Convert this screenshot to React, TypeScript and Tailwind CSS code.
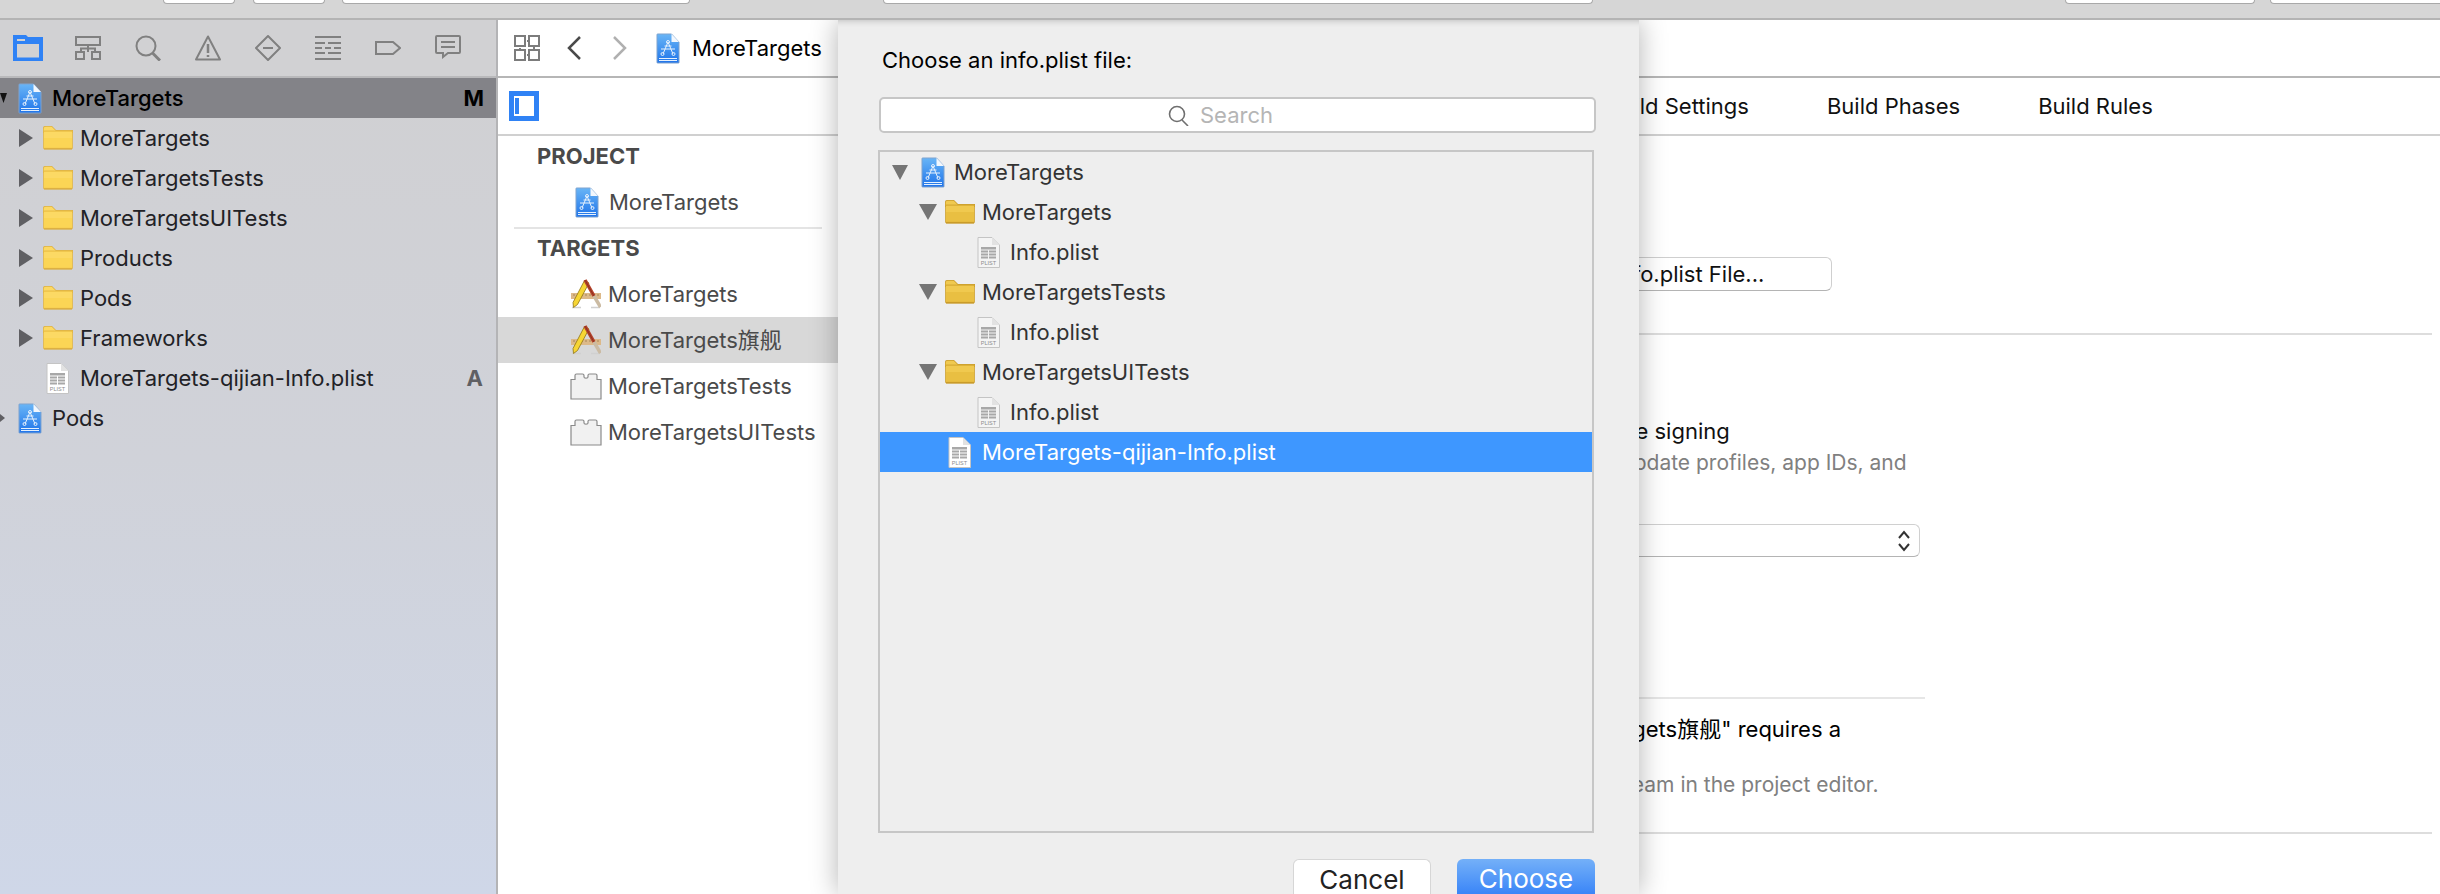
function ProjectIcon() {
    return (
        <svg width="24" height="31" viewBox="0 0 24 31" className="shrink-0">
            <defs>
                <linearGradient id="proj" x1="0" y1="0" x2="0" y2="1">
                    <stop offset="0" stopColor="#69b5f6" />
                    <stop offset="1" stopColor="#1f74ea" />
                </linearGradient>
            </defs>
            <path d="M1.5 1h14l7.5 8v20.5a.5.5 0 0 1-.5.5h-21a.5.5 0 0 1-.5-.5V1.5a.5.5 0 0 1 .5-.5z" fill="url(#proj)" stroke="#7ea3cf" />
            <path d="M15.5 1v8H23z" fill="#f2f7fd" />
            <g stroke="#e6f1fd" strokeWidth="1" fill="none">
                <path d="M12 9 7 21M12 9l5 12M5 16h14M8.5 13h7" />
                <circle cx="6.5" cy="21" r="1.5" />
                <circle cx="17.5" cy="21" r="1.5" />
                <circle cx="12" cy="9" r="1.5" />
                <path d="M3 25.5h18M3 27.5h18" />
            </g>
        </svg>
    )
}

function FolderIcon({ dark = false }: { dark?: boolean }) {
    const top = dark ? "#f0c94f" : "#fcd964"
    const bottom = dark ? "#e9bf42" : "#fbd555"
    const edge = dark ? "#c99b2a" : "#dcb043"
    return (
        <svg width="30" height="24" viewBox="0 0 30 24" className="shrink-0">
            <path d="M0 5V2q0-2 2-2h7l4 4h17v3H0z" fill={edge} />
            <path d="M.7 5V2.500q0-1.800 1.800-1.800h6.200l4 4h16.600V7H.7z" fill={top} />
            <rect x="0.5" y="5" width="29" height="18" rx="1" fill={bottom} stroke={edge} strokeWidth="0.7" />
            <path d="M1 6h28v6H1z" fill={top} />
            <path d="M1 22.700h28" stroke={edge} strokeWidth="1.600" />
        </svg>
    )
}

function PlistIcon({ bright = false }: { bright?: boolean }) {
    const fill = bright ? "#ffffff" : "#f4f4f4"
    return (
        <svg width="23" height="31" viewBox="0 0 23 31" className="shrink-0">
            <path d="M1 .5h14l7.500 7.500v22.500H1z" fill={fill} stroke="#c4c4c4" />
            <path d="M15 .5V8h7.500z" fill="#e2e2e2" />
            <g fill="#a8a8a8">
                <rect x="4" y="10" width="15" height="2.500" />
                <rect x="4" y="13.500" width="7" height="2" />
                <rect x="12" y="13.500" width="7" height="2" />
                <rect x="4" y="16.500" width="7" height="2" />
                <rect x="12" y="16.500" width="7" height="2" />
                <rect x="4" y="19.500" width="7" height="2" />
                <rect x="12" y="19.500" width="7" height="2" />
            </g>
            <text x="11.500" y="28" textAnchor="middle" fontSize="5.500" fill="#8c8c8c" fontFamily="Liberation Sans">PLIST</text>
        </svg>
    )
}

function TargetIcon() {
    return (
        <svg width="30" height="30" viewBox="0 0 30 30" className="shrink-0">
            <path d="M1 28.500h9M20 28.500h9" stroke="#d0d0d0" strokeWidth="1.500" />
            <rect x="0" y="14" width="30" height="6" fill="#dcb98a" />
            <path d="M3 15v2M7 15v2M11 15v2M15 15v2M19 15v2M23 15v2M27 15v2" stroke="#9a784a" strokeWidth="0.8" />
            <path d="M13.500 1.500 18 4 6.500 25.500 2.500 28.500l-.5-5z" fill="#f6d534" stroke="#8f7414" strokeWidth="0.8" />
            <path d="M14 1 23 17" stroke="#b5412a" strokeWidth="3.500" />
            <path d="M23 17l6.500 11" stroke="#cbbba3" strokeWidth="3.500" />
            <path d="M14 1 23 17" stroke="#6e2a1b" strokeWidth="0.6" />
        </svg>
    )
}

function TestIcon() {
    return (
        <svg width="32" height="27" viewBox="0 0 32 27" className="shrink-0">
            <path
                d="M1 6.500h4V2.500q0-1.500 1.500-1.500h6q1.500 0 1.500 1.500v1.500c0 1.500 4 1.500 4 0V2.500q0-1.500 1.500-1.500h6q1.500 0 1.500 1.500v4h4v19.500H1z"
                fill="#f1f1f1"
                stroke="#8a8a8a"
                strokeWidth="1.200"
            />
        </svg>
    )
}

function Triangle({ dir, w, h, color }: { dir: "right" | "down"; w: number; h: number; color: string }) {
    const points = dir === "right" ? `0,0 ${w},${h / 2} 0,${h}` : `0,0 ${w},0 ${w / 2},${h}`
    return (
        <svg width={w} height={h} className="shrink-0">
            <polygon points={points} fill={color} />
        </svg>
    )
}

function NavIcons() {
    const s = { stroke: "#808080", strokeWidth: 2, fill: "none" }
    return (
        <div className="flex h-[58px] items-center border-b-2 border-[#b9b9bb] bg-[#d1d1d3] pl-[13px] gap-[30px] w-full">
            <svg width="30" height="26" viewBox="0 0 30 26" className="shrink-0">
                <path d="M0 0h13l2 2h15v24H0z" fill="#2f82f5" />
                <rect x="4" y="9" width="22" height="13.500" fill="#d1d1d3" />
                <rect x="4" y="4" width="8" height="2" fill="#d1d1d3" />
            </svg>
            <svg width="26" height="26" viewBox="0 0 26 26" {...s} className="shrink-0 ml-[2px]">
                <rect x="1" y="2" width="24" height="8" />
                <path d="M13 10v7M6 17v-3.500h14V17" />
                <rect x="1" y="17" width="8" height="7" />
                <rect x="17" y="17" width="8" height="7" />
            </svg>
            <svg width="26" height="26" viewBox="0 0 26 26" {...s} className="shrink-0 ml-[4px]">
                <circle cx="11" cy="11" r="9.500" />
                <path d="M17.500 18 25 25.500" strokeWidth="3" />
            </svg>
            <svg width="26" height="26" viewBox="0 0 26 26" {...s} className="shrink-0 ml-[4px]">
                <path d="M13 1.500 25 24.500H1z" strokeLinejoin="round" />
                <path d="M13 9v9M13 20v2" strokeWidth="2.500" />
            </svg>
            <svg width="26" height="26" viewBox="0 0 26 26" {...s} className="shrink-0 ml-[4px]">
                <path d="M13 1 25 13 13 25 1 13z" strokeLinejoin="round" />
                <path d="M8 13h10" />
            </svg>
            <svg width="26" height="24" viewBox="0 0 26 24" {...s} className="shrink-0 ml-[4px]">
                <path d="M0 1h26M0 7h10M13 7h13M0 12h7M10 12h6M19 12h7M0 17h10M13 17h13M0 23h26" />
            </svg>
            <svg width="26" height="14" viewBox="0 0 26 14" {...s} className="shrink-0 ml-[4px]">
                <path d="M1 1h17l7 6-7 6H1z" />
            </svg>
            <svg width="26" height="24" viewBox="0 0 26 24" {...s} className="shrink-0 ml-[4px] -mt-[2px]">
                <path d="M2 1h22q1 0 1 1v15q0 1-1 1H13l-5 4v-4H2q-1 0-1-1V2q0-1 1-1z" />
                <path d="M6 7h14M6 12h14" />
            </svg>
        </div>
    )
}

function TreeRow({ name }: { name: string }) {
    return (
        <div className="flex h-10 items-center pl-[19px] text-[#222226]">
            <Triangle dir="right" w={14} h={18} color="#5f5f63" />
            <span className="ml-[10px]"><FolderIcon /></span>
            <span className="ml-[7px] whitespace-nowrap">{name}</span>
        </div>
    )
}

function Navigator() {
    return (
        <div className="flex w-[498px] shrink-0 flex-col border-r-2 border-[#b4b4b6] bg-gradient-to-b from-[#d0d0d2] via-[#d0d2d9] to-[#cfd7e8] overflow-hidden">
            <NavIcons />
            <div className="flex h-10 items-center bg-[#838388] pr-[12px] text-black font-medium">
                <Triangle dir="down" w={7} h={10} color="#111111" />
                <span className="ml-[11px]"><ProjectIcon /></span>
                <span className="ml-[10px] whitespace-nowrap">MoreTargets</span>
                <span className="ml-auto font-bold">M</span>
            </div>
            <TreeRow name="MoreTargets" />
            <TreeRow name="MoreTargetsTests" />
            <TreeRow name="MoreTargetsUITests" />
            <TreeRow name="Products" />
            <TreeRow name="Pods" />
            <TreeRow name="Frameworks" />
            <div className="flex h-10 items-center pl-[46px] pr-[13px] text-[#222226]">
                <PlistIcon bright />
                <span className="ml-[11px] whitespace-nowrap">MoreTargets-qijian-Info.plist</span>
                <span className="ml-auto font-bold text-[#5f5f63]">A</span>
            </div>
            <div className="flex h-10 items-center text-[#222226]">
                <Triangle dir="right" w={5} h={8} color="#5f5f63" />
                <span className="ml-[13px]"><ProjectIcon /></span>
                <span className="ml-[10px]">Pods</span>
            </div>
        </div>
    )
}

function TopBar() {
    const btn = "h-[4px] rounded-b-[6px] border border-t-0 border-[#a9a9a9] bg-white shrink-0"
    return (
        <div className="flex h-[20px] items-start border-b-2 border-[#b4b4b4] bg-[#d6d6d6]">
            <div className={`${btn} ml-[163px] w-[72px]`} />
            <div className={`${btn} ml-[18px] w-[72px]`} />
            <div className={`${btn} ml-[17px] w-[348px]`} />
            <div className={`${btn} ml-[193px] w-[710px]`} />
            <div className={`${btn} ml-[472px] w-[190px]`} />
            <div className={`${btn} ml-[15px] w-[190px]`} />
        </div>
    )
}

function JumpBar() {
    return (
        <div className="flex h-[58px] items-center border-b-2 border-[#b6b6b6] bg-white pl-[16px] text-black">
            <svg width="26" height="26" viewBox="0 0 26 26" fill="none" stroke="#7c7c7c" strokeWidth="2" className="shrink-0">
                <rect x="1" y="1" width="10" height="10" />
                <path d="M15 1h10v10H15zM15 6h-2" />
                <rect x="1" y="15" width="10" height="10" />
                <path d="M15 15h10v10H15zM13 20h2M6 13v2M20 11v4" />
            </svg>
            <svg width="14" height="24" viewBox="0 0 14 24" fill="none" stroke="#4a4a4a" strokeWidth="2.500" className="ml-[27px] shrink-0">
                <path d="M13 1 2 12l11 11" />
            </svg>
            <svg width="14" height="24" viewBox="0 0 14 24" fill="none" stroke="#b0b0b0" strokeWidth="2.500" className="ml-[32px] shrink-0">
                <path d="m1 1 11 11L1 23" />
            </svg>
            <span className="ml-[29px]"><ProjectIcon /></span>
            <span className="ml-[12px] whitespace-nowrap">MoreTargets</span>
        </div>
    )
}

function TabBar() {
    return (
        <div className="flex h-[58px] items-center border-b-2 border-[#d0d0d0] bg-white pl-[11px] text-[#111111]">
            <div className="flex h-[30px] w-[30px] shrink-0 items-center border-[5px] border-[#2f82f5] pl-[1px]">
                <div className="h-[16px] w-[4px] bg-[#2f82f5]" />
            </div>
            <div className="ml-[1068px] flex gap-[78px] whitespace-nowrap">
                <span>Build Settings</span>
                <span>Build Phases</span>
                <span>Build Rules</span>
            </div>
        </div>
    )
}

function TargetList() {
    return (
        <div className="flex w-[340px] shrink-0 flex-col text-[#4a4a4a]">
            <div className="flex h-[43px] items-center pl-[39px] pb-[3px] font-bold">PROJECT</div>
            <div className="flex h-[46px] items-center pl-[77px]">
                <ProjectIcon />
                <span className="ml-[10px]">MoreTargets</span>
            </div>
            <div className="mx-[16px] mt-[2px] h-[2px] bg-[#e4e4e4]" />
            <div className="flex h-[42px] items-center pl-[39px] pb-[3px] font-bold">TARGETS</div>
            <div className="flex h-[46px] items-center pl-[73px]">
                <TargetIcon />
                <span className="ml-[7px] whitespace-nowrap">MoreTargets</span>
            </div>
            <div className="flex h-[46px] items-center bg-[#d8d8d8] pl-[73px]">
                <TargetIcon />
                <span className="ml-[7px] whitespace-nowrap">MoreTargets旗舰</span>
            </div>
            <div className="flex h-[46px] items-center pl-[72px]">
                <TestIcon />
                <span className="ml-[6px] whitespace-nowrap">MoreTargetsTests</span>
            </div>
            <div className="flex h-[46px] items-center pl-[72px]">
                <TestIcon />
                <span className="ml-[6px] whitespace-nowrap">MoreTargetsUITests</span>
            </div>
        </div>
    )
}

function SettingsPane() {
    return (
        <div className="flex min-w-0 flex-1 flex-col pl-[604px] pr-[8px] text-[#111111]">
            <button className="mt-[121px] h-[34px] w-[390px] shrink-0 rounded-[6px] border border-[#cfcfcf] border-b-[#b4b4b4] bg-white pl-[18px] text-center text-[#111111]">
                Choose Info.plist File...
            </button>
            <div className="mt-[42px] h-[2px] -ml-[604px] bg-[#dddddd]" />
            <div className="mt-[83px] -ml-[24px] whitespace-nowrap leading-[26px]">Automatically manage signing</div>
            <div className="mt-[6px] -ml-[40px] whitespace-nowrap text-[21px] leading-[26px] text-[#808080]">Xcode will create and update profiles, app IDs, and</div>
            <div className="mt-[48px] flex h-[33px] w-[478px] items-center justify-end rounded-[6px] border border-[#d0d0d0] border-b-[#b4b4b4] bg-white pr-[8px]">
                <svg width="14" height="22" viewBox="0 0 14 22" fill="none" stroke="#333333" strokeWidth="2">
                    <path d="m2 8 5-6 5 6M2 14l5 6 5-6" />
                </svg>
            </div>
            <div className="mt-[140px] h-[2px] w-[483px] bg-[#e6e6e6]" />
            <div className="mt-[17px] -ml-[24px] whitespace-nowrap leading-[26px] text-black">Signing for "MoreTargets旗舰" requires a</div>
            <div className="-ml-[24px] whitespace-nowrap leading-[19px] text-black">development team.</div>
            <div className="mt-[11px] -ml-[37px] whitespace-nowrap text-[21px] leading-[26px] text-[#808080]">Select a development team in the project editor.</div>
            <div className="mt-[34px] h-[2px] -ml-[604px] bg-[#dddddd]" />
        </div>
    )
}

function OutlineRow({ className = "", children }: { className?: string; children: React.ReactNode }) {
    return <div className={`flex h-10 items-center whitespace-nowrap ${className}`}>{children}</div>
}

function FolderGroup({ name }: { name: string }) {
    return (
        <>
            <OutlineRow className="pl-[39px]">
                <Triangle dir="down" w={18} h={16} color="#757575" />
                <span className="ml-[8px]"><FolderIcon dark /></span>
                <span className="ml-[7px]">{name}</span>
            </OutlineRow>
            <OutlineRow className="pl-[97px]">
                <PlistIcon />
                <span className="ml-[10px]">Info.plist</span>
            </OutlineRow>
        </>
    )
}

function ChooseDialog() {
    return (
        <div className="absolute left-[340px] top-0 flex h-[874px] w-[801px] flex-col bg-[#eeeeee] pl-[41px] shadow-[0_0_26px_rgba(0,0,0,0.3),inset_0_7px_6px_-6px_rgba(0,0,0,0.2)] text-[#333333]">
            <div className="mt-[26px] ml-[3px] h-[28px] leading-[28px] whitespace-nowrap text-black">Choose an info.plist file:</div>
            <div className="mt-[23px] flex h-[36px] w-[717px] items-center justify-center rounded-[5px] border-2 border-[#c6c6c6] bg-white pr-[34px] pt-[1px] text-[#b5b5b5]">
                <svg width="21" height="21" viewBox="0 0 21 21" fill="none" stroke="#6f6f6f" strokeWidth="1.600" className="shrink-0">
                    <circle cx="9" cy="9" r="7.500" />
                    <path d="m14 15 6 6" />
                </svg>
                <span className="ml-[11px]">Search</span>
            </div>
            <div className="mt-[17px] -ml-[1px] h-[683px] w-[716px] border-2 border-[#c6c6c6]">
                <OutlineRow className="pl-[12px]">
                    <Triangle dir="down" w={16} h={15} color="#757575" />
                    <span className="ml-[13px]"><ProjectIcon /></span>
                    <span className="ml-[9px]">MoreTargets</span>
                </OutlineRow>
                <FolderGroup name="MoreTargets" />
                <FolderGroup name="MoreTargetsTests" />
                <FolderGroup name="MoreTargetsUITests" />
                <OutlineRow className="bg-[#3e97ff] pl-[68px] text-white">
                    <PlistIcon bright />
                    <span className="ml-[11px]">MoreTargets-qijian-Info.plist</span>
                </OutlineRow>
            </div>
            <div className="mt-[26px] flex gap-[26px] pl-[414px] text-[26px]">
                <button className="h-[35px] w-[138px] rounded-t-[6px] border border-b-0 border-[#d6d6d6] bg-white pt-[5px] leading-[30px] text-[#222222]">Cancel</button>
                <button className="h-[35px] w-[138px] rounded-t-[6px] bg-gradient-to-b from-[#74b0f8] to-[#3a85f7] pt-[5px] leading-[30px] text-white">Choose</button>
            </div>
        </div>
    )
}

export default function App() {
    return (
        <div className="flex h-[894px] w-full flex-col overflow-hidden bg-white font-['Inter','Noto_Sans_CJK_SC',sans-serif] text-[22px]">
            <TopBar />
            <div className="flex min-h-0 flex-1">
                <Navigator />
                <div className="relative flex min-w-0 flex-1 flex-col overflow-hidden">
                    <JumpBar />
                    <TabBar />
                    <div className="flex min-h-0 flex-1">
                        <TargetList />
                        <SettingsPane />
                    </div>
                    <ChooseDialog />
                </div>
            </div>
        </div>
    )
}
